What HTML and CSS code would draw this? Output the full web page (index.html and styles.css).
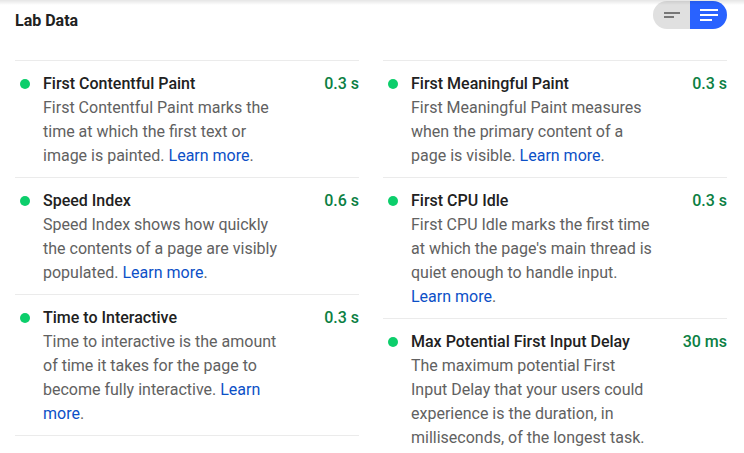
FILE: index.html
```html
<!DOCTYPE html>
<html lang="en">

<head>
  <meta charset="UTF-8" />
  <meta name="viewport" content="width=device-width, initial-scale=1.0" />
  <title>Lab Data</title>
  <link rel="stylesheet" href="styles.css">
</head>

<body>
  <!-- shadow from the sticky bar above -->
  <div class="shade"></div>

  <div class="lab">
    <div class="header">
      <h2>Lab Data</h2>
      <div class="toggle">
        <span class="opt">
          <svg width="16" height="8" viewBox="0 0 16 8">
            <rect x="0" y="1" width="16" height="2" fill="#777" />
            <rect x="0" y="5" width="10" height="2" fill="#777" />
          </svg>
        </span>
        <span class="opt active">
          <svg width="18" height="14" viewBox="0 0 18 14">
            <rect x="0" y="1" width="18" height="2" fill="#fff" />
            <rect x="0" y="6" width="18" height="2" fill="#fff" />
            <rect x="0" y="11" width="12" height="2" fill="#fff" />
          </svg>
        </span>
      </div>
    </div>

    <div class="metrics">
      <div class="col">
        <div class="metric">
          <span class="dot"></span>
          <span class="title">First Contentful Paint</span>
          <span class="value">0.3 s</span>
          <p class="desc">First Contentful Paint marks the time at which the first text or image is painted. <a href="#">Learn more</a>.</p>
        </div>
        <div class="metric">
          <span class="dot"></span>
          <span class="title">Speed Index</span>
          <span class="value">0.6 s</span>
          <p class="desc">Speed Index shows how quickly the contents of a page are visibly populated. <a href="#">Learn more</a>.</p>
        </div>
        <div class="metric">
          <span class="dot"></span>
          <span class="title">Time to Interactive</span>
          <span class="value">0.3 s</span>
          <p class="desc">Time to interactive is the amount of time it takes for the page to become fully interactive. <a href="#">Learn more</a>.</p>
        </div>
      </div>

      <div class="col">
        <div class="metric">
          <span class="dot"></span>
          <span class="title">First Meaningful Paint</span>
          <span class="value">0.3 s</span>
          <p class="desc">First Meaningful Paint measures when the primary content of a page is visible. <a href="#">Learn more</a>.</p>
        </div>
        <div class="metric">
          <span class="dot"></span>
          <span class="title">First CPU Idle</span>
          <span class="value">0.3 s</span>
          <p class="desc">First CPU Idle marks the first time at which the page's main thread is quiet enough to handle input. <a href="#">Learn more</a>.</p>
        </div>
        <div class="metric">
          <span class="dot"></span>
          <span class="title">Max Potential First Input Delay</span>
          <span class="value">30 ms</span>
          <p class="desc">The maximum potential First Input Delay that your users could experience is the duration, in milliseconds, of the longest task.</p>
        </div>
      </div>
    </div>
  </div>
</body>

</html>
```

FILE: styles.css
```css
* {
  box-sizing: border-box;
  margin: 0;
  padding: 0;
}

body {
  background-color: #fff;
  font-family: Roboto, "Liberation Sans", sans-serif;
  font-size: 16px;
  color: #212121;
}

.shade {
  position: absolute;
  top: 0;
  left: 0;
  right: 0;
  height: 5px;
  background: linear-gradient(rgba(0, 0, 0, 0.1), rgba(0, 0, 0, 0));
}

.lab {
  padding: 1px 17px 0 15px;
}

/* Header */
.header {
  display: flex;
  justify-content: space-between;
  align-items: flex-start;
  height: 59px;
}

.header h2 {
  font-size: 16px;
  font-weight: 700;
  line-height: 24px;
  margin-top: 8px;
}

.toggle {
  display: flex;
  width: 74px;
  height: 28px;
  border-radius: 14px;
  overflow: hidden;
}

.toggle .opt {
  flex: 1;
  display: flex;
  align-items: center;
  justify-content: center;
  background-color: #e0e0e0;
}

.toggle .opt.active {
  background-color: #2962ff;
}

.toggle svg {
  display: block;
}

/* Metrics */
.metrics {
  display: grid;
  grid-template-columns: 344px 344px;
  gap: 24px;
  align-items: start;
}

.col {
  border-bottom: 1px solid #ebebeb;
}

.metric {
  display: grid;
  grid-template-columns: 28px 1fr auto;
  border-top: 1px solid #ebebeb;
  padding: 11px 0 9px;
  line-height: 24px;
}

.dot {
  width: 10px;
  height: 10px;
  margin-left: 5px;
  border-radius: 50%;
  background-color: #0cce6b;
  align-self: center;
}

.title {
  font-weight: 500;
}

.value {
  color: #0b8043;
  font-weight: 500;
}

.desc {
  grid-column: 2 / 4;
  width: 243px;
  color: #616161;
}

.desc a {
  color: #0c50c7;
  text-decoration: none;
}
```
